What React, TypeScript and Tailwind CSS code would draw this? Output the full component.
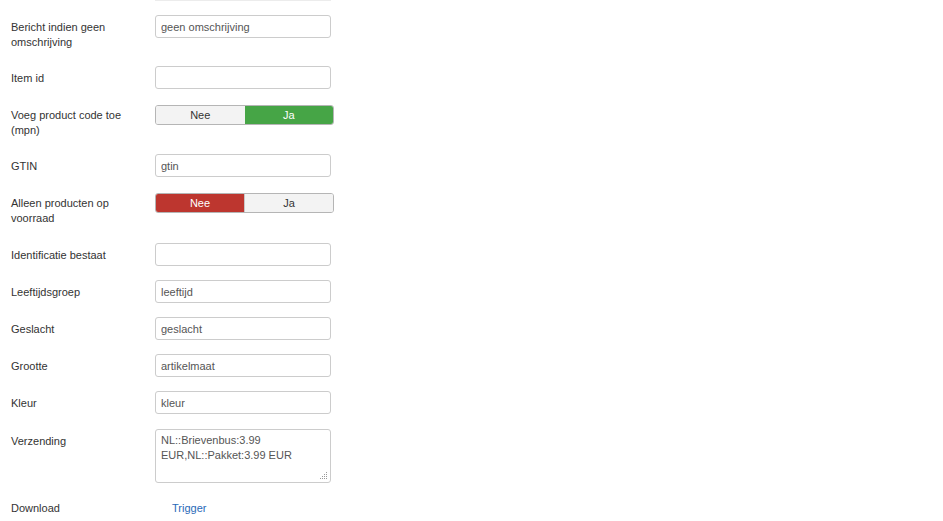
type Row =
  | { kind: 'input'; label: string; value: string; h: string }
  | { kind: 'toggle'; label: string; on: 'nee' | 'ja'; h: string }

const rows: Row[] = [
  { kind: 'input', label: 'Bericht indien geen omschrijving', value: 'geen omschrijving', h: 'h-[51px]' },
  { kind: 'input', label: 'Item id', value: '', h: 'h-[39px]' },
  { kind: 'toggle', label: 'Voeg product code toe (mpn)', on: 'ja', h: 'h-[49px]' },
  { kind: 'input', label: 'GTIN', value: 'gtin', h: 'h-[39px]' },
  { kind: 'toggle', label: 'Alleen producten op voorraad', on: 'nee', h: 'h-[50px]' },
  { kind: 'input', label: 'Identificatie bestaat', value: '', h: 'h-[37px]' },
  { kind: 'input', label: 'Leeftijdsgroep', value: 'leeftijd', h: 'h-[37px]' },
  { kind: 'input', label: 'Geslacht', value: 'geslacht', h: 'h-[37px]' },
  { kind: 'input', label: 'Grootte', value: 'artikelmaat', h: 'h-[37px]' },
  { kind: 'input', label: 'Kleur', value: 'kleur', h: 'h-[38px]' },
]

function Toggle({ on }: { on: 'nee' | 'ja' }) {
  return (
    <div className="flex h-[20px] w-[179px] overflow-hidden rounded-[3px] border border-[#b5b5b5] text-[11px]">
      <div
        className={
          on === 'nee'
            ? 'flex flex-1 items-center justify-center bg-[#bd362f] text-white'
            : 'flex flex-1 items-center justify-center bg-[#f3f3f3] text-[#333]'
        }
      >
        Nee
      </div>
      <div
        className={
          on === 'ja'
            ? 'flex flex-1 items-center justify-center bg-[#46a546] text-white'
            : 'flex flex-1 items-center justify-center border-l border-[#c8c8c8] bg-[#f3f3f3] text-[#333]'
        }
      >
        Ja
      </div>
    </div>
  )
}

// little dotted resize grip like the old browser one
function Grip() {
  return (
    <svg className="absolute bottom-[3px] right-[3px]" width="8" height="8" viewBox="0 0 8 8">
      <g fill="#9a9a9a">
        <rect x="6" y="0" width="1" height="1" />
        <rect x="4" y="2" width="1" height="1" />
        <rect x="6" y="2" width="1" height="1" />
        <rect x="2" y="4" width="1" height="1" />
        <rect x="4" y="4" width="1" height="1" />
        <rect x="6" y="4" width="1" height="1" />
        <rect x="0" y="6" width="1" height="1" />
        <rect x="2" y="6" width="1" height="1" />
        <rect x="4" y="6" width="1" height="1" />
        <rect x="6" y="6" width="1" height="1" />
      </g>
    </svg>
  )
}

export default function App() {
  return (
    <div className="min-h-[521px] w-[943px] bg-white font-['Liberation_Sans',Arial,sans-serif] text-[11px] text-[#333]">
      <div className="ml-[155px] h-[1px] w-[176px] bg-[#ececec]" />
      <div className="flex flex-col pt-[14px]">
        {rows.map((row) => (
          <div key={row.label} className={`flex items-start ${row.h}`}>
            <div
              className={
                row.kind === 'toggle'
                  ? 'w-[155px] pl-[11px] pr-[20px] pt-[3px] leading-[15px]'
                  : 'w-[155px] pl-[11px] pr-[40px] pt-[5px] leading-[15px]'
              }
            >
              {row.label}
            </div>
            {row.kind === 'input' ? (
              <input
                readOnly
                value={row.value}
                className="h-[23px] w-[176px] rounded-[3px] border border-[#cccccc] bg-white px-[5px] pt-[1px] text-[11px] text-[#555] outline-none"
              />
            ) : (
              <Toggle on={row.on} />
            )}
          </div>
        ))}
        <div className="flex h-[71px] items-start">
          <div className="w-[155px] pl-[11px] pt-[5px] leading-[15px]">Verzending</div>
          <div className="relative">
            <textarea
              readOnly
              value={'NL::Brievenbus:3.99\nEUR,NL::Pakket:3.99 EUR'}
              className="block h-[54px] w-[176px] resize-none rounded-[3px] border border-[#cccccc] bg-white px-[5px] pt-[3px] text-[11px] leading-[15px] text-[#555] outline-none"
            />
            <Grip />
          </div>
        </div>
        <div className="flex items-start pt-[1px]">
          <div className="w-[155px] pl-[11px] leading-[15px]">Download</div>
          <a className="ml-[17px] leading-[15px] text-[#2a69b8]">Trigger</a>
        </div>
      </div>
    </div>
  )
}
